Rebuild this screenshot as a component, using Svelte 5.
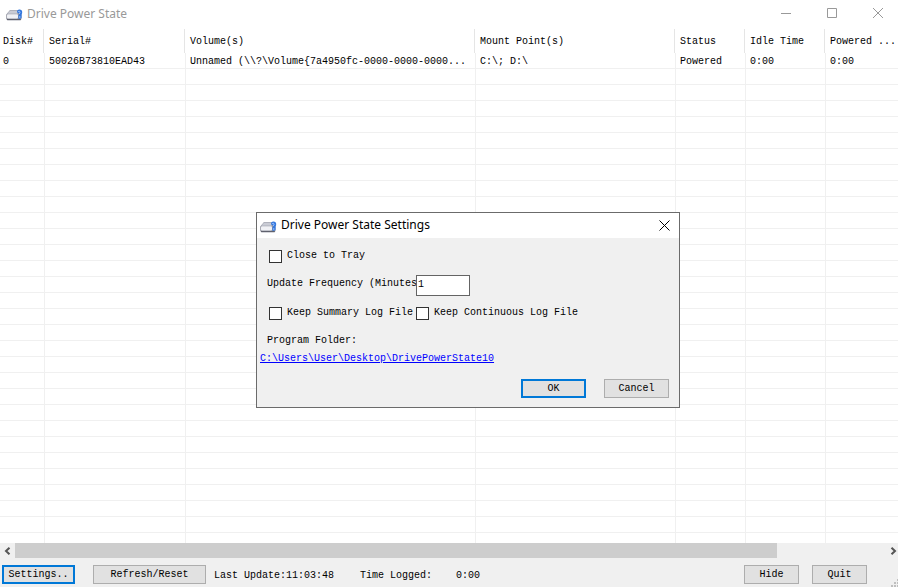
<script>
  const columns = [
    { title: 'Disk#', width: '45px' },
    { title: 'Serial#', width: '141px' },
    { title: 'Volume(s)', width: '290px' },
    { title: 'Mount Point(s)', width: '200px' },
    { title: 'Status', width: '70px' },
    { title: 'Idle Time', width: '80px' },
    { title: 'Powered ...', width: 'auto' }
  ];
  const drives = [
    ['0', '50026B73810EAD43', 'Unnamed (\\\\?\\Volume{7a4950fc-0000-0000-0000...', 'C:\\; D:\\', 'Powered', '0:00', '0:00']
  ];
  const blankRows = Array.from({ length: 30 }, (_, i) => i);
  const folder = 'C:\\Users\\User\\Desktop\\DrivePowerState10';

  let closeToTray = $state(false);
  let keepSummary = $state(false);
  let keepContinuous = $state(false);
  let frequency = $state('1');
</script>

{#snippet driveIcon()}
  <svg class="drive" width="17" height="12" viewBox="0 0 17 12" aria-hidden="true">
    <path d="M4 1 H13 L15.5 5 V10 L14.5 11.2 H1.5 L0.2 10 V5.5 Z" fill="#9496a2" />
    <path d="M4.2 1.6 H12 L11.6 4.8 H1.2 Z" fill="#c9cbd4" />
    <rect x="1" y="5.2" width="11" height="4.2" rx="1" fill="#f0f1f5" />
    <path d="M1 10.6 H14.8" stroke="#5a5c68" stroke-width="1" />
    <path d="M11 3.2 Q11 0.4 13.4 0.4 Q16.2 0.4 16.2 3.2 Q16.2 4.6 15.6 5.2 V9 L14 9.8 H12.4 V6.6 L13.4 5 Z" fill="#3478de" />
    <path d="M12.2 2.6 Q13.4 1.8 14 2.8 Q14.4 4 13 5" stroke="#a8caff" stroke-width="0.9" fill="none" />
    <rect x="13" y="7.4" width="1.4" height="1.2" fill="#a8caff" />
  </svg>
{/snippet}

<div class="window">
  <header class="titlebar">
    {@render driveIcon()}
    <h1>Drive Power State</h1>
    <div class="controls">
      <button type="button" aria-label="Minimize">
        <svg width="10" height="10" viewBox="0 0 10 10"><path d="M0 5.5 H10" /></svg>
      </button>
      <button type="button" aria-label="Maximize">
        <svg width="10" height="10" viewBox="0 0 10 10"><path d="M0.5 0.5 H9.5 V9.5 H0.5 Z" /></svg>
      </button>
      <button type="button" aria-label="Close">
        <svg width="10" height="10" viewBox="0 0 10 10"><path d="M0 0 L10 10 M10 0 L0 10" /></svg>
      </button>
    </div>
  </header>

  <main class="list">
    <table>
      <colgroup>
        {#each columns as column}
          <col style:width={column.width} />
        {/each}
      </colgroup>
      <thead>
        <tr>
          {#each columns as column}
            <th scope="col">{column.title}</th>
          {/each}
        </tr>
      </thead>
      <tbody>
        {#each drives as drive}
          <tr>
            {#each drive as value}
              <td>{value}</td>
            {/each}
          </tr>
        {/each}
        {#each blankRows as row (row)}
          <tr>
            {#each columns as column}
              <td></td>
            {/each}
          </tr>
        {/each}
      </tbody>
    </table>
  </main>

  <div class="scrollbar">
    <button type="button" aria-label="Scroll left">
      <svg width="7" height="8" viewBox="0 0 7 8"><path d="M5.5 0.7 L2 4 L5.5 7.3" /></svg>
    </button>
    <div class="track"><div class="thumb"></div></div>
    <button type="button" aria-label="Scroll right">
      <svg width="7" height="8" viewBox="0 0 7 8"><path d="M1.5 0.7 L5 4 L1.5 7.3" /></svg>
    </button>
  </div>

  <footer class="statusbar">
    <div class="group">
      <button type="button" class="btn primary settings">Settings..</button>
      <button type="button" class="btn refresh">Refresh/Reset</button>
    </div>
    <span class="update">Last Update:11:03:48</span>
    <span class="logged">Time Logged:</span>
    <span>0:00</span>
    <div class="actions">
      <button type="button" class="btn small">Hide</button>
      <button type="button" class="btn small">Quit</button>
    </div>
    <svg class="grip" width="8" height="8" viewBox="0 0 8 8" aria-hidden="true">
      <path d="M6 0h2v2h-2z M3 3h2v2h-2z M6 3h2v2h-2z M0 6h2v2h-2z M3 6h2v2h-2z M6 6h2v2h-2z" fill="#bfbfbf" />
    </svg>
  </footer>

  <div class="dialog" role="dialog" aria-labelledby="dialog-title">
    <div class="dialog-title">
      {@render driveIcon()}
      <h2 id="dialog-title">Drive Power State Settings</h2>
      <button type="button" aria-label="Close dialog">
        <svg width="11" height="11" viewBox="0 0 11 11"><path d="M0.5 0.5 L10.5 10.5 M10.5 0.5 L0.5 10.5" /></svg>
      </button>
    </div>
    <form class="dialog-body" onsubmit={(e) => e.preventDefault()}>
      <div class="row">
        <label class="check"><input type="checkbox" bind:checked={closeToTray} />Close to Tray</label>
      </div>
      <div class="row frequency">
        <label for="frequency">Update Frequency (Minutes</label>
        <input id="frequency" type="text" bind:value={frequency} />
      </div>
      <div class="row">
        <label class="check first"><input type="checkbox" bind:checked={keepSummary} />Keep Summary Log File</label>
        <label class="check"><input type="checkbox" bind:checked={keepContinuous} />Keep Continuous Log File</label>
      </div>
      <p>Program Folder:</p>
      <a href="#folder">{folder}</a>
      <div class="buttons">
        <button type="submit" class="btn primary">OK</button>
        <button type="button" class="btn">Cancel</button>
      </div>
    </form>
  </div>
</div>

<style>
  :global(body) {
    margin: 0;
  }

  .window {
    position: relative;
    display: flex;
    flex-direction: column;
    height: 100vh;
    overflow: hidden;
    background: #fff;
    color: #000;
    font: 10px/16px 'Liberation Mono', monospace;
  }

  .window :is(button, input) {
    box-sizing: border-box;
    margin: 0;
    padding: 0;
    color: inherit;
    font: inherit;
  }

  h1,
  h2 {
    flex: 1;
    margin: 0;
    font: 12px/16px 'Noto Sans', sans-serif;
    white-space: nowrap;
  }

  .drive {
    flex: none;
    margin-right: 4px;
  }

  .titlebar {
    display: flex;
    flex: none;
    align-items: center;
    height: 28px;
    padding-left: 6px;
    color: #999;
  }

  .titlebar .drive {
    margin-top: 2px;
  }

  .controls {
    display: flex;
    gap: 6px;
    height: 26px;
    align-self: flex-start;
  }

  .controls button {
    display: grid;
    place-items: center;
    width: 40px;
    border: 0;
    background: none;
  }

  .controls path,
  .dialog-title button path {
    fill: none;
    stroke: currentColor;
  }

  .list {
    flex: 1;
    min-height: 0;
    overflow: hidden;
  }

  table {
    width: 100%;
    table-layout: fixed;
    border-spacing: 0;
  }

  th,
  td {
    box-sizing: border-box;
    padding: 0 0 0 4px;
    overflow: hidden;
    font-weight: 400;
    text-align: left;
    white-space: nowrap;
  }

  th:first-child,
  td:first-child {
    padding-left: 3px;
  }

  th {
    height: 25px;
    padding-top: 2px;
    background: linear-gradient(#e5e5e5, #e5e5e5) right 1px top 1px / 1px 100% no-repeat;
  }

  td {
    height: 16px;
    padding-top: 2px;
    border-right: 1px solid #f0f0f0;
    border-bottom: 1px solid #f0f0f0;
    line-height: 13px;
  }

  th:last-child {
    background: none;
  }

  td:last-child {
    border-right: 0;
  }

  .scrollbar {
    display: flex;
    flex: none;
    height: 15px;
    background: #f0f0f0;
  }

  .scrollbar button {
    display: grid;
    place-items: center;
    width: 15px;
    border: 0;
    background: none;
  }

  .scrollbar button:last-child {
    width: 10px;
  }

  .scrollbar path {
    fill: none;
    stroke: #555;
    stroke-width: 2;
  }

  .track {
    flex: 1;
  }

  .thumb {
    width: 87.3%;
    height: 100%;
    background: #cdcdcd;
  }

  .statusbar {
    display: flex;
    flex: none;
    align-items: center;
    height: 29px;
    padding-left: 2px;
    box-sizing: border-box;
    padding-top: 4px;
    background: #f0f0f0;
    white-space: nowrap;
  }

  .statusbar span {
    padding-top: 2px;
  }

  .group {
    display: flex;
    gap: 18px;
  }

  .btn {
    flex: none;
    width: 65px;
    height: 19px;
    border: 1px solid #adadad;
    background: #e1e1e1;
  }

  .window .btn {
    line-height: 15px;
  }

  .primary {
    border: 2px solid #0078d7;
  }

  .settings {
    width: 73px;
  }

  .refresh {
    width: 113px;
  }

  .small {
    width: 55px;
  }

  .update {
    margin-left: 8px;
  }

  .logged {
    margin: 0 24px 0 26px;
  }

  .actions {
    display: flex;
    gap: 13px;
    margin: 0 24px 0 auto;
  }

  .grip {
    flex: none;
    align-self: flex-end;
    margin-right: -1px;
  }

  .dialog {
    position: absolute;
    top: 212px;
    left: 256px;
    box-sizing: border-box;
    width: 424px;
    border: 1px solid #6b6b6b;
    background: #f0f0f0;
  }

  .dialog-title {
    display: flex;
    align-items: center;
    height: 25px;
    padding-left: 3px;
    background: #fff;
  }

  .dialog-title .drive {
    margin-top: 3px;
  }

  .dialog-title h2 {
    padding-bottom: 2px;
  }

  .dialog-title button {
    display: grid;
    place-items: center;
    width: 30px;
    height: 24px;
    border: 0;
    background: none;
  }

  .dialog-body {
    display: flex;
    flex-direction: column;
    padding: 10px 10px 9px 3px;
  }

  .row {
    display: flex;
    padding-left: 9px;
    white-space: nowrap;
  }

  .check {
    display: flex;
    align-items: center;
  }

  .check input {
    width: 13px;
    height: 13px;
    margin-right: 5px;
    border: 1px solid #333;
    background: #fff;
    appearance: none;
  }

  .check input:checked {
    background: #333;
    box-shadow: inset 0 0 0 2px #fff;
  }

  .check.first {
    width: 147px;
  }

  .frequency {
    margin: 11px 0 9px;
    padding-left: 7px;
  }

  .frequency label {
    width: 149px;
    padding-top: 1px;
  }

  .frequency input {
    width: 54px;
    height: 21px;
    padding: 0 1px 2px;
    border: 1px solid #646464;
    background: #fff;
  }

  p {
    margin: 12px 0 2px 7px;
  }

  a {
    align-self: flex-start;
    color: #00f;
  }

  .buttons {
    display: flex;
    justify-content: flex-end;
    gap: 18px;
    margin-top: 12px;
  }
</style>
